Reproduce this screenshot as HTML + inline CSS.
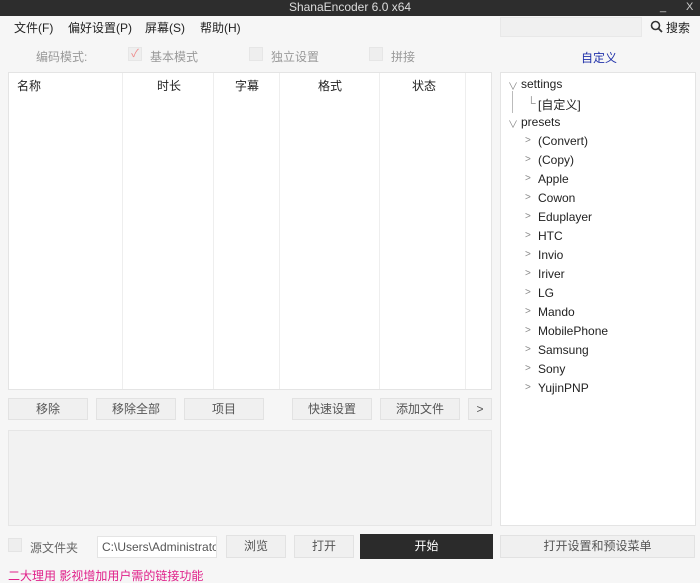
<!DOCTYPE html>
<html><head><meta charset="utf-8"><style>
*{margin:0;padding:0;box-sizing:border-box}
body{width:700px;height:575px;overflow:hidden;background:#f6f6f6;font-family:"Liberation Sans","Noto Sans CJK SC",sans-serif;font-size:12px;color:#222;position:relative}
.a{position:absolute}
.btn{position:absolute;background:#f0f0f0;border:1px solid #e2e2e2;text-align:center;color:#555;font-size:12px}
.tree div{position:absolute;left:37px;font-size:12px;color:#222}
.tree span{position:absolute;left:24px;color:#888;font-size:10px}
</style></head><body>
<div class="a" style="left:0;top:0;width:700px;height:16px;background:#2d2d2d;color:#ddd;font-size:12px;line-height:15px;text-align:center">ShanaEncoder 6.0 x64</div>
<div class="a" style="left:660px;top:0;color:#ccc;font-size:11px;line-height:14px">_</div>
<div class="a" style="left:686px;top:0;color:#ccc;font-size:11px;line-height:15px">X</div>
<div class="a" style="left:14px;top:20px;line-height:16px">文件(F)</div>
<div class="a" style="left:68px;top:20px;line-height:16px">偏好设置(P)</div>
<div class="a" style="left:145px;top:20px;line-height:16px">屏幕(S)</div>
<div class="a" style="left:200px;top:20px;line-height:16px">帮助(H)</div>
<div class="a" style="left:500px;top:17px;width:142px;height:20px;background:#f0f0f0;border:1px solid #e8e8e8"></div>
<svg class="a" style="left:650px;top:20px" width="14" height="14"><circle cx="5.5" cy="5.5" r="4" fill="none" stroke="#333" stroke-width="1.6"/><line x1="8.5" y1="8.5" x2="12" y2="12" stroke="#333" stroke-width="1.8"/></svg>
<div class="a" style="left:666px;top:20px;line-height:16px">搜索</div>
<div class="a" style="left:36px;top:48px;color:#999">编码模式:</div>
<div class="a" style="left:128px;top:47px;width:14px;height:14px;background:#eee;border:1px solid #e6e6e6;color:#e88;font-size:11px;line-height:12px;text-align:center">✓</div>
<div class="a" style="left:150px;top:48px;color:#999">基本模式</div>
<div class="a" style="left:249px;top:47px;width:14px;height:14px;background:#eee;border:1px solid #e6e6e6"></div>
<div class="a" style="left:271px;top:48px;color:#999">独立设置</div>
<div class="a" style="left:369px;top:47px;width:14px;height:14px;background:#eee;border:1px solid #e6e6e6"></div>
<div class="a" style="left:391px;top:48px;color:#999">拼接</div>
<div class="a" style="left:581px;top:49px;color:#2233aa">自定义</div>
<div class="a" style="left:8px;top:72px;width:484px;height:318px;background:#fff;border:1px solid #e4e4e4"></div>
<div class="a" style="left:122px;top:73px;width:1px;height:316px;background:#eee"></div>
<div class="a" style="left:213px;top:73px;width:1px;height:316px;background:#eee"></div>
<div class="a" style="left:279px;top:73px;width:1px;height:316px;background:#eee"></div>
<div class="a" style="left:379px;top:73px;width:1px;height:316px;background:#eee"></div>
<div class="a" style="left:465px;top:73px;width:1px;height:316px;background:#eee"></div>
<div class="a" style="left:17px;top:77px">名称</div>
<div class="a" style="left:157px;top:77px">时长</div>
<div class="a" style="left:235px;top:77px">字幕</div>
<div class="a" style="left:318px;top:77px">格式</div>
<div class="a" style="left:412px;top:77px">状态</div>
<div class="a tree" style="left:500px;top:72px;width:196px;height:454px;background:#fff;border:1px solid #e4e4e4">
<span style="left:7px;top:5px">∨</span><div style="left:20px;top:4px">settings</div>
<div class="a" style="left:11px;top:18px;width:1px;height:22px;background:#bbb;position:absolute"></div>
<div style="left:26px;top:23px;color:#999">└</div><div style="left:37px;top:23px">[自定义]</div>
<span style="left:7px;top:43px">∨</span><div style="left:20px;top:42px">presets</div>
<span style="top:62px">&gt;</span><div style="top:61px">(Convert)</div>
<span style="top:81px">&gt;</span><div style="top:80px">(Copy)</div>
<span style="top:100px">&gt;</span><div style="top:99px">Apple</div>
<span style="top:119px">&gt;</span><div style="top:118px">Cowon</div>
<span style="top:138px">&gt;</span><div style="top:137px">Eduplayer</div>
<span style="top:157px">&gt;</span><div style="top:156px">HTC</div>
<span style="top:176px">&gt;</span><div style="top:175px">Invio</div>
<span style="top:195px">&gt;</span><div style="top:194px">Iriver</div>
<span style="top:214px">&gt;</span><div style="top:213px">LG</div>
<span style="top:233px">&gt;</span><div style="top:232px">Mando</div>
<span style="top:252px">&gt;</span><div style="top:251px">MobilePhone</div>
<span style="top:271px">&gt;</span><div style="top:270px">Samsung</div>
<span style="top:290px">&gt;</span><div style="top:289px">Sony</div>
<span style="top:309px">&gt;</span><div style="top:308px">YujinPNP</div>
</div>
<div class="btn" style="left:8px;top:398px;width:80px;height:22px;line-height:20px">移除</div>
<div class="btn" style="left:96px;top:398px;width:80px;height:22px;line-height:20px">移除全部</div>
<div class="btn" style="left:184px;top:398px;width:80px;height:22px;line-height:20px">项目</div>
<div class="btn" style="left:292px;top:398px;width:80px;height:22px;line-height:20px">快速设置</div>
<div class="btn" style="left:380px;top:398px;width:80px;height:22px;line-height:20px">添加文件</div>
<div class="btn" style="left:468px;top:398px;width:24px;height:22px;line-height:20px">&gt;</div>
<div class="a" style="left:8px;top:430px;width:484px;height:96px;background:#f2f2f2;border:1px solid #e6e6e6"></div>
<div class="a" style="left:8px;top:538px;width:14px;height:14px;background:#eee;border:1px solid #e4e4e4"></div>
<div class="a" style="left:30px;top:539px;color:#666">源文件夹</div>
<div class="a" style="left:97px;top:536px;width:120px;height:22px;background:#fff;border:1px solid #e4e4e4;color:#555;line-height:20px;padding-left:4px;overflow:hidden;white-space:nowrap">C:\Users\Administrator</div>
<div class="btn" style="left:226px;top:535px;width:60px;height:23px;line-height:21px">浏览</div>
<div class="btn" style="left:294px;top:535px;width:60px;height:23px;line-height:21px">打开</div>
<div class="a" style="left:360px;top:534px;width:133px;height:25px;background:#2b2b2b;color:#fff;text-align:center;line-height:25px">开始</div>
<div class="btn" style="left:500px;top:535px;width:195px;height:23px;line-height:21px">打开设置和预设菜单</div>
<div class="a" style="left:8px;top:569px;color:#e0208a;font-size:12px;line-height:14px">二大理用 影视增加用户需的链接功能</div>
</body></html>
